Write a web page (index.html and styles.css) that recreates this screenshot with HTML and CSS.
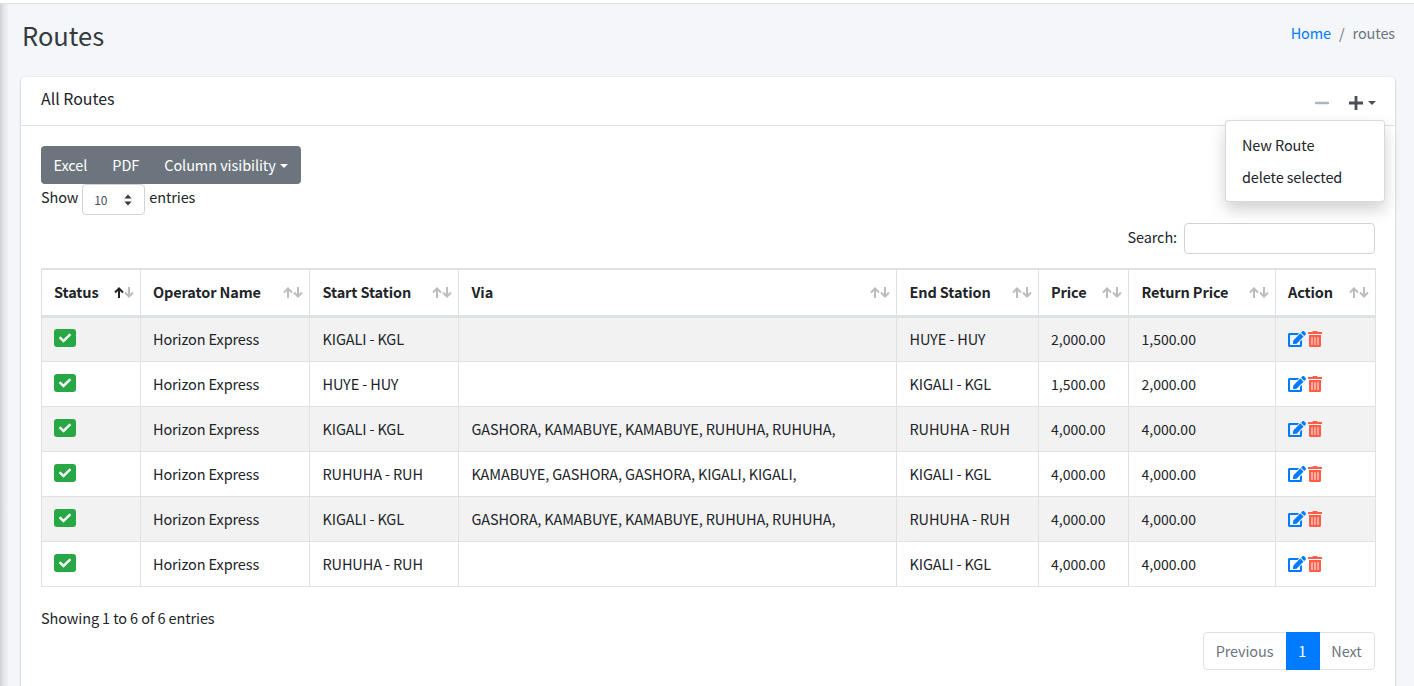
FILE: index.html
```html
<!DOCTYPE html>
<html lang="en">
<head>
<meta charset="utf-8">
<title>Routes</title>
<link rel="stylesheet" href="styles.css">
</head>
<body>
<div class="topline"></div>
<main class="content">
  <header class="page-head">
    <h1>Routes</h1>
    <nav class="crumbs"><a href="#">Home</a><span class="sep">/</span><span class="cur">routes</span></nav>
  </header>
  <section class="card">
    <div class="card-head">
      <h2>All Routes</h2>
      <div class="tools">
        <svg class="minus" viewBox="0 0 14 14"><rect x="0" y="5.8" width="14" height="2.4" rx="0.6"/></svg>
        <span class="plus-wrap">
          <svg class="plus" viewBox="0 0 14 14"><path d="M5.6 0h2.8v5.6H14v2.8H8.4V14H5.6V8.4H0V5.6h5.6z"/></svg>
          <span class="caret-dark"></span>
        </span>
      </div>
      <div class="menu">
        <a href="#">New Route</a>
        <a href="#">delete selected</a>
      </div>
    </div>
    <div class="card-body">
      <div class="btn-group">
        <button>Excel</button><button>PDF</button><button>Column visibility<span class="caret"></span></button>
      </div>
      <div class="length">
        <span>Show</span>
        <span class="select">10
          <svg viewBox="0 0 8 12"><path d="M4 0.5 7.6 4.6H0.4zM4 11.5 0.4 7.4H7.6z"/></svg>
        </span>
        <span>entries</span>
      </div>
      <div class="search"><label>Search:</label><span class="search-input"></span></div>
      <table>
        <colgroup>
          <col class="c1"><col class="c2"><col class="c3"><col class="c4"><col class="c5"><col class="c6"><col class="c7"><col class="c8">
        </colgroup>
        <thead>
          <tr id="head"></tr>
        </thead>
        <tbody id="rows"></tbody>
      </table>
      <p class="info">Showing 1 to 6 of 6 entries</p>
      <div class="pager-row">
        <div class="pager"><a href="#">Previous</a><a href="#" class="active">1</a><a href="#">Next</a></div>
      </div>
    </div>
  </section>
</main>
<script src="app.js"></script>
</body>
</html>
```
FILE: app.js
```js
var heads = ["Status", "Operator Name", "Start Station", "Via", "End Station", "Price", "Return Price", "Action"];
document.getElementById("head").innerHTML = heads.map(function (h, i) {
  return "<th>" + h + '<svg class="sort" viewBox="0 0 20 11">' +
    '<path class="' + (i === 0 ? "up on" : "up") + '" d="M5 11V2M1 5.5 5 1.5 9 5.5"/>' +
    '<path class="up" d="M15 0V9M11 5.5 15 9.5 19 5.5"/></svg></th>';
}).join("");
var data = [
  ["KIGALI - KGL", "", "HUYE - HUY", "2,000.00", "1,500.00"],
  ["HUYE - HUY", "", "KIGALI - KGL", "1,500.00", "2,000.00"],
  ["KIGALI - KGL", "GASHORA, KAMABUYE, KAMABUYE, RUHUHA, RUHUHA,", "RUHUHA - RUH", "4,000.00", "4,000.00"],
  ["RUHUHA - RUH", "KAMABUYE, GASHORA, GASHORA, KIGALI, KIGALI,", "KIGALI - KGL", "4,000.00", "4,000.00"],
  ["KIGALI - KGL", "GASHORA, KAMABUYE, KAMABUYE, RUHUHA, RUHUHA,", "RUHUHA - RUH", "4,000.00", "4,000.00"],
  ["RUHUHA - RUH", "", "KIGALI - KGL", "4,000.00", "4,000.00"]
];
var check = '<span class="badge"><svg viewBox="0 0 512 512"><path d="M173.9 439.4 7.5 273c-10-10-10-26.2 0-36.2l36.2-36.2c10-10 26.2-10 36.2 0L192 312.7 432.1 72.6c10-10 26.2-10 36.2 0l36.2 36.2c10 10 10 26.2 0 36.2L210.1 439.4c-10 10-26.2 10-36.2 0z"/></svg></span>';
var edit = '<svg class="ic-edit" viewBox="0 0 576 512"><path d="M402.6 83.2l90.2 90.2c3.8 3.8 3.8 10 0 13.8L274.4 405.6l-92.8 10.3c-12.4 1.4-22.9-9.1-21.5-21.5l10.3-92.8L388.8 83.2c3.8-3.8 10-3.8 13.8 0zm162-22.9l-48.8-48.8c-15.2-15.2-39.9-15.2-55.2 0l-35.4 35.4c-3.8 3.8-3.8 10 0 13.8l90.2 90.2c3.8 3.8 10 3.8 13.8 0l35.4-35.4c15.2-15.3 15.2-40 0-55.2zM384 346.2V448H64V128h229.8c3.2 0 6.2-1.3 8.5-3.5l40-40c7.6-7.6 2.2-20.5-8.5-20.5H48C21.5 64 0 85.5 0 112v352c0 26.5 21.5 48 48 48h352c26.5 0 48-21.5 48-48V306.2c0-10.7-12.9-16-20.5-8.5l-40 40c-2.2 2.3-3.5 5.3-3.5 8.5z"/></svg>';
var trash = '<svg class="ic-trash" viewBox="0 0 448 512"><path d="M32 464a48 48 0 0 0 48 48h288a48 48 0 0 0 48-48V128H32zm272-256a16 16 0 0 1 32 0v224a16 16 0 0 1-32 0zm-96 0a16 16 0 0 1 32 0v224a16 16 0 0 1-32 0zm-96 0a16 16 0 0 1 32 0v224a16 16 0 0 1-32 0zM432 32H312l-9.4-18.7A24 24 0 0 0 281.1 0H166.8a23.72 23.72 0 0 0-21.4 13.3L136 32H16A16 16 0 0 0 0 48v32a16 16 0 0 0 16 16h416a16 16 0 0 0 16-16V48a16 16 0 0 0-16-16z"/></svg>';
document.getElementById("rows").innerHTML = data.map(function (r) {
  return "<tr><td>" + check + "</td><td>Horizon Express</td><td>" + r[0] + "</td><td>" + r[1] + "</td><td>" + r[2] +
    '</td><td class="num">' + r[3] + '</td><td class="num">' + r[4] + '</td><td><span class="acts">' + edit + trash + "</span></td></tr>";
}).join("");
```
FILE: styles.css
```css
* { box-sizing: border-box; }
html, body { margin: 0; height: 100%; overflow: hidden; }
body {
  background: linear-gradient(90deg, #cfd0d2 0, #e6e7ea 4px, #f4f6f9 9px);
  font-family: "Noto Sans CJK SC", "Source Sans Pro", "Noto Sans", sans-serif;
  font-size: 14.5px;
  letter-spacing: -.12px;
  line-height: 24px;
  color: #212529;
}
.topline { height: 4px; border-bottom: 1px solid #dee2e6; background: #fff; }
.content { padding: 0 19px 0 21px; }
.page-head { display: flex; justify-content: space-between; align-items: flex-start; height: 73px; }
h1 { margin: 13px 0 0 1px; font-size: 25.5px; line-height: 36px; font-weight: 400; color: #343a40; letter-spacing: 0; }
.crumbs { margin-top: 17px; color: #6c757d; }
.crumbs a { color: #007bff; text-decoration: none; }
.sep { padding: 0 8px; }
.card {
  background: #fff;
  border-radius: 4px;
  box-shadow: 0 0 1px rgba(0,0,0,.125), 0 1px 3px rgba(0,0,0,.2);
}
.card-head {
  position: relative;
  height: 49px;
  display: flex;
  justify-content: space-between;
  border-bottom: 1px solid #dee2e6;
  padding: 10px 20px;
}
h2 { margin: 0; font-size: 15.9px; line-height: 24px; font-weight: 400; letter-spacing: 0; }
.tools { display: flex; align-items: center; gap: 20px; margin-right: -1px; height: 32px; }
.minus { width: 14px; height: 14px; fill: #adb5bd; }
.plus-wrap { display: flex; align-items: center; gap: 5px; }
.plus { width: 14px; height: 14px; fill: #495057; }
.caret-dark { border-top: 4px solid #495057; border-left: 4px solid transparent; border-right: 4px solid transparent; }
.menu {
  position: absolute;
  top: 43px;
  right: 10px;
  width: 160px;
  height: 82px;
  padding: 8px 0;
  background: #fff;
  border: 1px solid rgba(0,0,0,.15);
  border-radius: 4px;
  box-shadow: 0 8px 16px rgba(0,0,0,.18);
  z-index: 5;
}
.menu a { display: block; padding: 4px 16px; color: #212529; text-decoration: none; }
.card-body { padding: 20px; }
.btn-group { display: inline-flex; background: #6c757d; border-radius: 4px; height: 38px; vertical-align: top; }
.btn-group button {
  font: inherit;
  letter-spacing: -.08px;
  color: #fff;
  background: none;
  border: 0;
  padding: 0 12.5px;
}
.btn-group button:last-child { padding-right: 13px; }
.caret {
  display: inline-block;
  margin-left: 4px;
  vertical-align: 3px;
  border-top: 4.8px solid #fff;
  border-left: 4.8px solid transparent;
  border-right: 4.8px solid transparent;
}
.length { display: flex; align-items: flex-start; gap: 4px; height: 39px; line-height: 26px; }
.select {
  width: 63px;
  height: 31px;
  padding: 0 12px 0 11px;
  border: 1px solid #ced4da;
  border-radius: 4px;
  font-size: 12px;
  line-height: 29px;
  color: #495057;
  display: flex;
  align-items: center;
  justify-content: space-between;
  background: #fff;
}
.select svg { width: 8px; height: 12px; fill: #343a40; }
.search { display: flex; justify-content: flex-end; align-items: flex-start; gap: 7px; height: 31px; line-height: 28px; }
.search-input { width: 191px; height: 31px; border: 1px solid #ced4da; border-radius: 4px; background: #fff; }
table {
  margin-top: 14px;
  width: 1334px;
  table-layout: fixed;
  border-collapse: collapse;
  border: 1px solid #dee2e6;
}
.c1 { width: 99px; } .c2 { width: 169px; } .c3 { width: 149px; } .c4 { width: 438px; }
.c5 { width: 142px; } .c6 { width: 90px; } .c7 { width: 147px; } .c8 { width: 100px; }
th, td { border: 1px solid #dee2e6; padding: 0 12.5px; text-align: left; vertical-align: middle; }
th:nth-child(1), td:nth-child(1), th:nth-child(2), td:nth-child(2),
th:nth-child(6), td:nth-child(6), th:nth-child(8), td:nth-child(8) { padding-left: 12px; }
th { position: relative; height: 47px; border-top-width: 2px; border-bottom: 3px solid #dee2e6; font-weight: 700; white-space: nowrap; }
td { height: 45px; white-space: nowrap; }
tbody tr:nth-child(odd) { background: #f2f2f2; }
.num { font-size: 14px; letter-spacing: 0; }
.sort { position: absolute; right: 6px; top: 17px; width: 20px; height: 11px; }
.sort path { fill: none; stroke: #212529; stroke-width: 2; }
.sort .up { opacity: .3; }
.sort .up.on { opacity: 1; }
.badge {
  display: inline-flex;
  width: 22px;
  height: 18px;
  margin-top: -6px;
  background: #28a745;
  border-radius: 3px;
  align-items: center;
  justify-content: center;
  vertical-align: middle;
}
.badge svg { width: 12px; height: 12px; fill: #fff; }
.acts { display: flex; align-items: center; gap: 2px; }
.ic-edit { width: 18px; height: 16px; fill: #007bff; }
.ic-trash { width: 14px; height: 16px; fill: #ff5d48; }
.info { margin: 19px 0 0; height: 24px; }
.pager-row { display: flex; justify-content: flex-end; margin-top: 2px; }
.pager { display: flex; height: 38px; border: 1px solid #dee2e6; border-radius: 4px; background: #fff; }
.pager a { padding: 0 12.5px; line-height: 36px; color: #6c757d; text-decoration: none; }
.pager a:first-child { padding-left: 11.5px; }
.pager a:last-child { padding-left: 11.5px; }
.pager a.active { background: #007bff; color: #fff; margin: -1px 0; height: 38px; line-height: 38px; padding-right: 13.5px; }
```
